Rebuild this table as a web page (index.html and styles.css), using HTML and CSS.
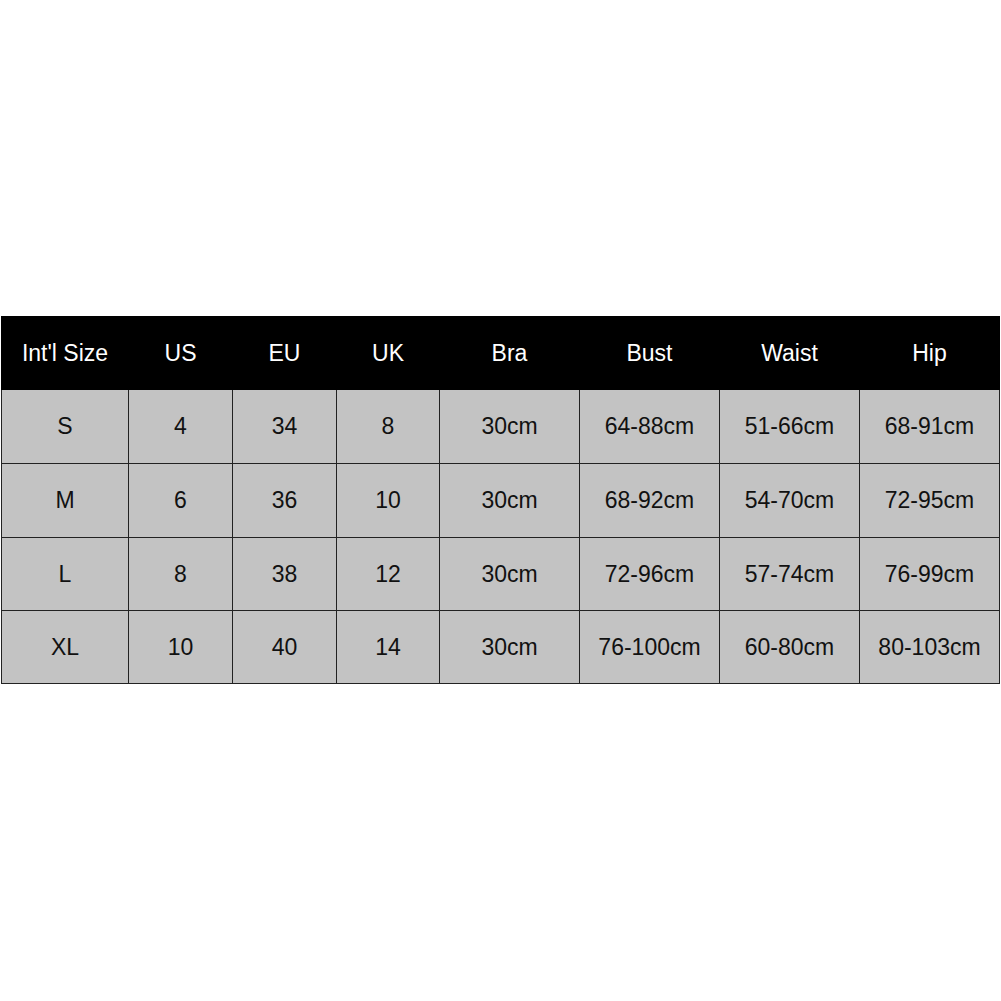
FILE: index.html
```html
<!DOCTYPE html>
<html>
<head>
<meta charset="utf-8">
<link rel="stylesheet" href="styles.css">
</head>
<body>
<div class="wrap">
<table class="size-table">
<colgroup>
<col class="c1"><col class="c2"><col class="c2"><col class="c4"><col class="c3"><col class="c3"><col class="c3"><col class="c3">
</colgroup>
<thead>
<tr><th>Int'l Size</th><th>US</th><th>EU</th><th>UK</th><th>Bra</th><th>Bust</th><th>Waist</th><th>Hip</th></tr>
</thead>
<tbody>
<tr class="tall"><td>S</td><td>4</td><td>34</td><td>8</td><td>30cm</td><td>64-88cm</td><td>51-66cm</td><td>68-91cm</td></tr>
<tr class="tall"><td>M</td><td>6</td><td>36</td><td>10</td><td>30cm</td><td>68-92cm</td><td>54-70cm</td><td>72-95cm</td></tr>
<tr><td>L</td><td>8</td><td>38</td><td>12</td><td>30cm</td><td>72-96cm</td><td>57-74cm</td><td>76-99cm</td></tr>
<tr><td>XL</td><td>10</td><td>40</td><td>14</td><td>30cm</td><td>76-100cm</td><td>60-80cm</td><td>80-103cm</td></tr>
</tbody>
</table>
</div>
</body>
</html>
```
FILE: styles.css
```css
html, body {
  margin: 0;
  padding: 0;
  background: #ffffff;
}
.wrap {
  padding-top: 316px;
  padding-left: 1px;
}
.size-table {
  border-collapse: collapse;
  table-layout: fixed;
  width: 998px;
  font-family: "Liberation Sans", Arial, sans-serif;
  font-size: 23px;
}
.c1 { width: 127px; }
.c2 { width: 104px; }
.c4 { width: 103px; }
.c3 { width: 140px; }
.size-table th {
  background: #000000;
  color: #ffffff;
  font-weight: normal;
  height: 72px;
  padding: 0;
  text-align: center;
  border: 1px solid #000000;
}
.size-table td {
  background: #c3c3c3;
  color: #111111;
  height: 72px;
  padding: 0;
  text-align: center;
  border: 1px solid #222222;
}
.size-table .tall td {
  height: 73px;
}
```
